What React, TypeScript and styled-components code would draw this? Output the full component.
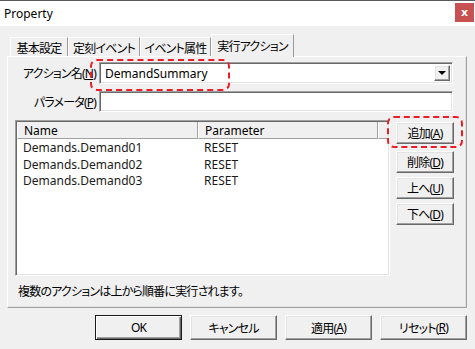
import styled, { createGlobalStyle } from "styled-components";

const GlobalStyle = createGlobalStyle`
  html, body {
    margin: 0;
    padding: 0;
    background: #f0f0f0;
  }
  body {
    font-family: "Noto Sans", "Noto Sans CJK JP", sans-serif;
    font-size: 12px;
    color: #000;
    font-feature-settings: "palt";
  }
`;

const tabs = [
  { label: "基本設定", width: 58 },
  { label: "定刻イベント", width: 72 },
  { label: "イベント属性", width: 71 },
  { label: "実行アクション", width: 83, active: true },
];

const actions = [
  { name: "Demands.Demand01", param: "RESET" },
  { name: "Demands.Demand02", param: "RESET" },
  { name: "Demands.Demand03", param: "RESET" },
];

const App = () => {
  return (
    <Window>
      <GlobalStyle />
      <TitleBar>
        <Title>Property</Title>
        <CloseButton>x</CloseButton>
      </TitleBar>
      <Body>
        <TabStrip>
          {tabs.map((t) => (
            <Tab key={t.label} $width={t.width} $active={!!t.active}>
              {t.label}
            </Tab>
          ))}
        </TabStrip>
        <Panel>
          <FieldRow>
            <Label>
              アクション名(<U>N</U>)
            </Label>
            <ComboBox>
              <ComboText>DemandSummary</ComboText>
              <DropButton>
                <Arrow />
              </DropButton>
              <Mark $left={-10} $top={-4} $width={140} $height={32} />
            </ComboBox>
          </FieldRow>
          <FieldRow $last>
            <Label>
              パラメータ(<U>P</U>)
            </Label>
            <TextInput />
          </FieldRow>
          <Main>
            <ListBox>
              <ListHeader>
                <HeaderCell $width={181}>Name</HeaderCell>
                <HeaderCell $width={180}>Parameter</HeaderCell>
                <HeaderFill />
              </ListHeader>
              {actions.map((a) => (
                <ListRow key={a.name}>
                  <Cell $width={181}>{a.name}</Cell>
                  <Cell $width={180}>{a.param}</Cell>
                </ListRow>
              ))}
            </ListBox>
            <SideButtons>
              <MarkedSlot>
                <SideButton>
                  追加(<U>A</U>)
                </SideButton>
                <Mark $left={-9} $top={-6} $width={76} $height={32} />
              </MarkedSlot>
              <SideButton>
                削除(<U>D</U>)
              </SideButton>
              <SideButton>
                上へ(<U>U</U>)
              </SideButton>
              <SideButton>
                下へ(<U>D</U>)
              </SideButton>
            </SideButtons>
          </Main>
          <Note>複数のアクションは上から順番に実行されます。</Note>
        </Panel>
        <Footer>
          <DialogButton $default>OK</DialogButton>
          <DialogButton>キャンセル</DialogButton>
          <DialogButton>
            適用(<U>A</U>)
          </DialogButton>
          <DialogButton>
            リセット(<U>R</U>)
          </DialogButton>
        </Footer>
      </Body>
    </Window>
  );
};

export default App;

// Japanese UI text is narrower in the original font
const jp = `
  letter-spacing: -0.8px;
`;

const raised = `
  background: #f0f0f0;
  border: 1px solid;
  border-color: #fff #696969 #696969 #fff;
  box-shadow: inset -1px -1px 0 #a0a0a0, inset 1px 1px 0 #e3e3e3;
`;

const sunken = `
  background: #fff;
  border: 1px solid;
  border-color: #a0a0a0 #fff #fff #a0a0a0;
  box-shadow: inset 1px 1px 0 #696969, inset -1px -1px 0 #e3e3e3;
`;

const Window = styled.div`
  width: 475px;
  height: 349px;
  display: flex;
  flex-direction: column;
  background: #f0f0f0;
  overflow: hidden;
`;

const TitleBar = styled.div`
  height: 25px;
  border-top: 1px solid #5a5a5a;
  background: #fff;
  display: flex;
  align-items: center;
  justify-content: space-between;
  padding-left: 4px;
`;

const Title = styled.span`
  font-size: 12px;
`;

const CloseButton = styled.div`
  width: 19px;
  height: 19px;
  margin: -2px 1px 0 0;
  background: #c75050;
  color: #fff;
  font-weight: bold;
  font-size: 11px;
  font-family: "DejaVu Sans", sans-serif;
  display: flex;
  align-items: center;
  justify-content: center;
`;

const Body = styled.div`
  flex: 1;
  padding: 8px 8px 0 7px;
`;

const TabStrip = styled.div`
  display: flex;
  align-items: flex-end;
  height: 22px;
  padding-left: 3px;
  position: relative;
  z-index: 1;
`;

const Tab = styled.div<{ $width: number; $active: boolean }>`
  ${jp}
  box-sizing: border-box;
  width: ${(p) => p.$width}px;
  height: ${(p) => (p.$active ? 23 : 19)}px;
  margin-bottom: ${(p) => (p.$active ? -1 : 0)}px;
  background: #f0f0f0;
  border-top: 1px solid #fff;
  border-left: 1px solid #fff;
  border-right: 1px solid #9a9a9a;
  display: flex;
  align-items: center;
  justify-content: center;
  padding-top: ${(p) => (p.$active ? 0 : 1)}px;
`;

const Panel = styled.div`
  box-sizing: border-box;
  width: 460px;
  height: 252px;
  border: 1px solid;
  border-color: #fff #a0a0a0 #a0a0a0 #fff;
  box-shadow: inset -1px -1px 0 #e3e3e3;
  padding: 5px 12px 0 7px;
  display: flex;
  flex-direction: column;
`;

const FieldRow = styled.div<{ $last?: boolean }>`
  display: flex;
  align-items: center;
  gap: 3px;
  height: ${(p) => (p.$last ? 21 : 22)}px;
  margin-bottom: ${(p) => (p.$last ? 8 : 7)}px;
`;

const Label = styled.span`
  ${jp}
  width: 81px;
  text-align: right;
  white-space: nowrap;
`;

const U = styled.span`
  text-decoration: underline;
`;

const ComboBox = styled.div`
  ${sunken}
  position: relative;
  box-sizing: border-box;
  width: 354px;
  height: 22px;
  display: flex;
  align-items: stretch;
  padding: 2px;
`;

const ComboText = styled.span`
  flex: 1;
  padding-left: 3px;
  display: flex;
  align-items: center;
`;

const DropButton = styled.div`
  ${raised}
  box-sizing: border-box;
  width: 16px;
  display: flex;
  align-items: center;
  justify-content: center;
`;

const Arrow = styled.span`
  width: 0;
  height: 0;
  border-left: 4px solid transparent;
  border-right: 4px solid transparent;
  border-top: 4px solid #000;
`;

const TextInput = styled.div`
  ${sunken}
  box-sizing: border-box;
  width: 354px;
  height: 21px;
`;

const Mark = styled.span<{ $left: number; $top: number; $width: number; $height: number }>`
  position: absolute;
  left: ${(p) => p.$left}px;
  top: ${(p) => p.$top}px;
  width: ${(p) => p.$width}px;
  height: ${(p) => p.$height}px;
  box-sizing: border-box;
  border: 2px dashed #ee1c24;
  border-radius: 7px;
  pointer-events: none;
`;

const Main = styled.div`
  display: flex;
  gap: 6px;
  height: 156px;
`;

const ListBox = styled.div`
  ${sunken}
  box-sizing: border-box;
  width: 375px;
  padding: 1px;
  display: flex;
  flex-direction: column;
`;

const ListHeader = styled.div`
  display: flex;
  height: 17px;
  background: #f0f0f0;
`;

const HeaderCell = styled.div<{ $width: number }>`
  box-sizing: border-box;
  width: ${(p) => p.$width}px;
  padding-left: 6px;
  border-left: 1px solid #fff;
  border-right: 1px solid #a0a0a0;
  border-bottom: 1px solid #a0a0a0;
  display: flex;
  align-items: center;
`;

const HeaderFill = styled.div`
  flex: 1;
  border-left: 1px solid #fff;
  border-bottom: 1px solid #a0a0a0;
`;

const ListRow = styled.div`
  display: flex;
  height: 16px;
  align-items: center;
  margin-top: 0.5px;
`;

const Cell = styled.div<{ $width: number }>`
  width: ${(p) => p.$width}px;
  padding-left: 6px;
  box-sizing: border-box;
  color: #1a1a1a;
`;

const SideButtons = styled.div`
  display: flex;
  flex-direction: column;
  gap: 4px;
  padding-top: 2px;
`;

const MarkedSlot = styled.div`
  position: relative;
  margin-bottom: 3px;
`;

const SideButton = styled.div`
  ${raised}
  ${jp}
  box-sizing: border-box;
  width: 58px;
  height: 22px;
  display: flex;
  align-items: center;
  justify-content: center;
`;

const Note = styled.div`
  ${jp}
  margin-top: 8px;
  padding-left: 3px;
  line-height: 16px;
`;

const Footer = styled.div`
  display: flex;
  justify-content: flex-end;
  gap: 8px;
  padding-top: 7px;
`;

const DialogButton = styled.div<{ $default?: boolean }>`
  ${raised}
  ${jp}
  box-sizing: border-box;
  width: 87px;
  height: 25px;
  display: flex;
  align-items: center;
  justify-content: center;
  ${(p) =>
    p.$default &&
    `
    border: 1px solid #1a1a1a;
    box-shadow: inset 1px 1px 0 #fff, inset -1px -1px 0 #696969, inset -2px -2px 0 #a0a0a0;
  `}
`;
